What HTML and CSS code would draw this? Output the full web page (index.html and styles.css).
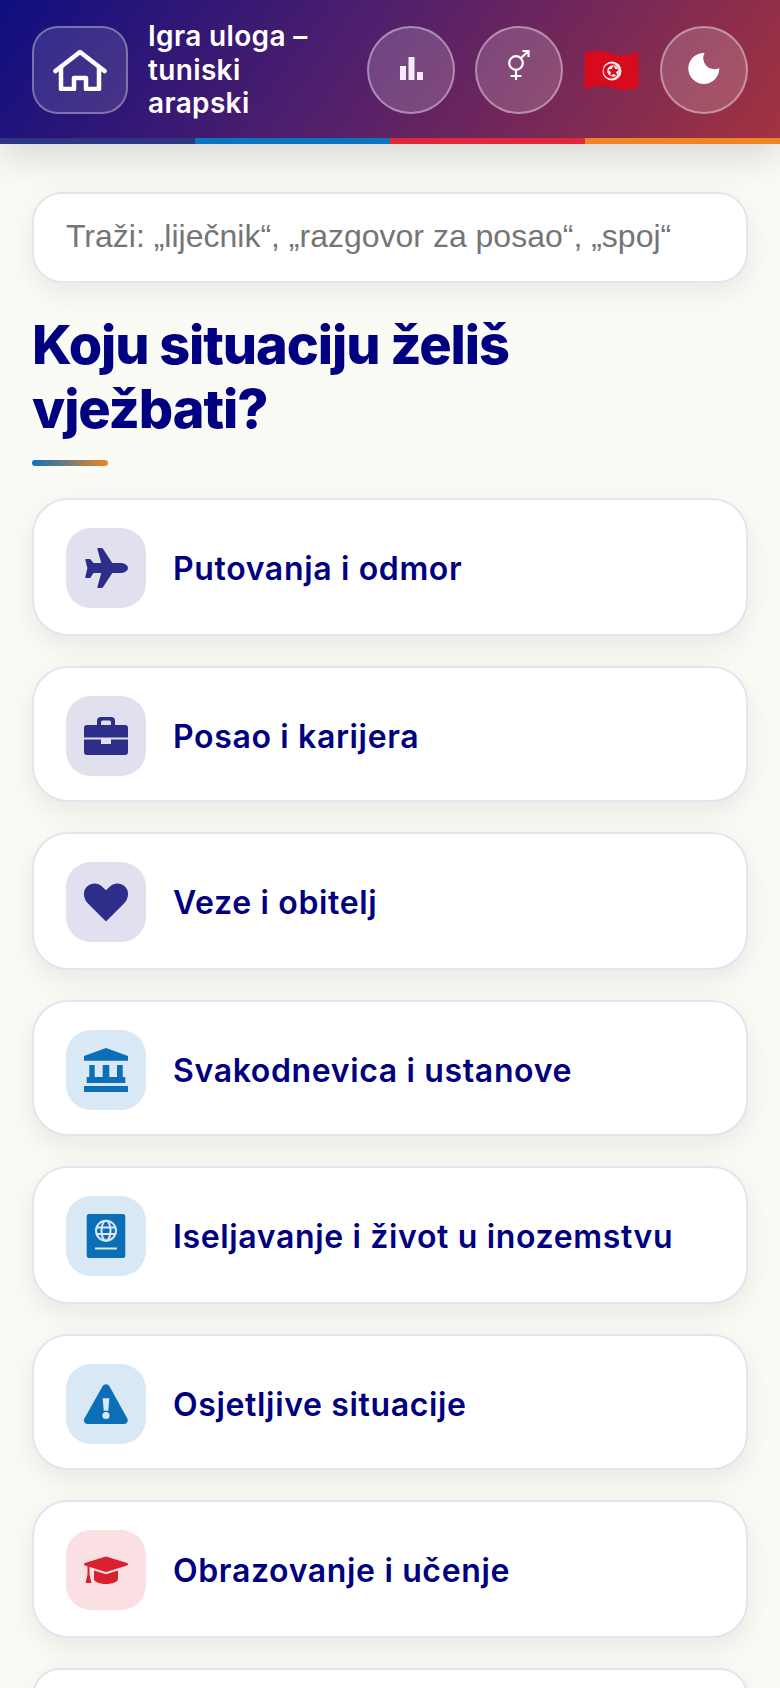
FILE: index.html
```html
<!DOCTYPE html>
<html lang="hr">
<head>
    <meta charset="UTF-8">
    <meta name="viewport" content="width=device-width, initial-scale=1.0">
    <title>Igra uloga – tuniski arapski</title>
    <link rel="stylesheet" href="styles.css">
</head>
<body>
    <!-- Header Section -->
    <header class="header">
        <div class="header-row">
            <button class="home-btn" aria-label="Početna">
                <svg class="icon-home" viewBox="0 0 54 42">
                    <path d="M2.500 22 27 3l24.500 19"/>
                    <path d="M8 19v21h13V29h12v11h13V19"/>
                </svg>
            </button>
            <div class="header-title">Igra uloga – tuniski arapski</div>
            <div class="header-actions">
                <button class="round-btn" aria-label="Statistika">
                    <svg class="icon-stats" viewBox="0 0 23 23">
                        <rect x="0" y="9" width="6" height="14"/>
                        <rect x="8.500" y="0" width="6" height="23"/>
                        <rect x="17" y="15" width="6" height="8"/>
                    </svg>
                </button>
                <button class="round-btn" aria-label="Rod">
                    <svg class="icon-gender" viewBox="0 0 22 30">
                        <circle cx="8" cy="13" r="6.800"/>
                        <path d="M8 20v10M2.500 26h11M13 8l7.500-7M14.500 1h6v6"/>
                    </svg>
                </button>
                <svg class="flag" viewBox="0 0 55 41" aria-label="Tunis">
                    <path class="flag-red" d="M1 3C9 0 20 1 28 4s18 2 26-2v35c-8 3-17 3-26 0S9 36 1 39z"/>
                    <circle class="flag-white" cx="28" cy="21" r="9.500"/>
                    <circle class="flag-red" cx="27" cy="21" r="7"/>
                    <circle class="flag-white" cx="29" cy="21" r="5.800"/>
                    <path class="flag-red" d="m29.500 16.500 1.300 3.100 3.300.2-2.500 2.100.8 3.200-2.900-1.700-2.800 1.800.8-3.200-2.600-2.100 3.300-.3z"/>
                </svg>
                <button class="round-btn" aria-label="Tamni način">
                    <svg class="icon-moon" viewBox="0 0 32 31">
                        <path d="M16.600 0A15.500 15.500 0 1 0 31.300 15 11 11 0 0 1 16.600 0z"/>
                    </svg>
                </button>
            </div>
        </div>
        <div class="color-bar">
            <span class="bar-navy"></span>
            <span class="bar-blue"></span>
            <span class="bar-red"></span>
            <span class="bar-orange"></span>
        </div>
    </header>

    <main class="container">
        <input class="search" type="text" placeholder="Traži: „liječnik“, „razgovor za posao“, „spoj“ …">

        <h1 class="page-title">Koju situaciju želiš vježbati?</h1>
        <div class="title-line"></div>

        <!-- Categories -->
        <div class="category-list">
            <a class="category">
                <span class="tile tile-navy">
                    <svg viewBox="0 0 44 44"><path d="M44 22c0 2.800-3.600 5-7.500 5h-8.200L19 41.300c-.3.400-.7.700-1.200.7h-3.500c-.6 0-1-.6-.9-1.100L17.200 27H9.500l-2.900 4.400c-.2.400-.6.600-1 .6H2.100c-.5 0-.9-.5-.8-1L3.400 22 1.300 14c-.1-.5.3-1 .8-1h3.500c.4 0 .8.200 1 .6L9.500 17h7.700L13.400 3.100c-.1-.5.3-1.100.9-1.100h3.500c.5 0 .9.300 1.200.7L28.300 17h8.200c3.900 0 7.500 2.200 7.500 5z"/></svg>
                </span>
                <span class="category-name">Putovanja i odmor</span>
            </a>
            <a class="category">
                <span class="tile tile-navy">
                    <svg viewBox="0 0 44 44"><path d="M13 11V7a4 4 0 0 1 4-4h10a4 4 0 0 1 4 4v4h-4V8a1.500 1.500 0 0 0-1.500-1.500h-7A1.500 1.500 0 0 0 17 8v3z"/><path d="M3 11h38a3 3 0 0 1 3 3v9.500H0V14a3 3 0 0 1 3-3z"/><path d="M0 25.500h17V30h10v-4.500h17V38a3 3 0 0 1-3 3H3a3 3 0 0 1-3-3z"/></svg>
                </span>
                <span class="category-name">Posao i karijera</span>
            </a>
            <a class="category">
                <span class="tile tile-navy">
                    <svg viewBox="0 0 44 44"><path d="M22 41.500 4 23.500C-1.200 18.400-1.200 10.600 3 6.600c4.400-4.200 11-4 15 0l4 3.600 4-3.600c4-4 10.600-4.200 15 0 4.200 4 4.200 11.800-1 16.900z"/></svg>
                </span>
                <span class="category-name">Veze i obitelj</span>
            </a>
            <a class="category">
                <span class="tile tile-blue">
                    <svg viewBox="0 0 44 44"><path d="M22 0 44 8v4.700H0V8z"/><path d="M5.300 17h5.400v12H5.300zM18.700 17h6.600v12h-6.600zM33 17h5.700v12H33z"/><path d="M2.700 29h38.600v6H2.700z"/><path d="M0 38h44v6H0z"/></svg>
                </span>
                <span class="category-name">Svakodnevica i ustanove</span>
            </a>
            <a class="category">
                <span class="tile tile-blue">
                    <svg viewBox="0 0 44 44"><rect x="2.700" y="0" width="38.600" height="44" rx="2.500"/><g class="tile-line"><circle cx="22" cy="16.700" r="10"/><ellipse cx="22" cy="16.700" rx="4.500" ry="10"/><path d="M12 13.500h20M12 20h20"/><path d="M11 34.500h22"/></g></svg>
                </span>
                <span class="category-name">Iseljavanje i život u inozemstvu</span>
            </a>
            <a class="category">
                <span class="tile tile-blue">
                    <svg viewBox="0 0 44 44"><path d="M18.700 4a4 4 0 0 1 6.600 0l18 32.500c1.200 2.500-.3 5.500-3.300 5.500H3.500C.6 42-.9 39 .4 36.500z"/><path class="tile-gap" d="M18.700 16.300h6.600l-1 12.500h-4.600z"/><circle class="tile-gap" cx="22" cy="33.500" r="3.600"/></svg>
                </span>
                <span class="category-name">Osjetljive situacije</span>
            </a>
            <a class="category">
                <span class="tile tile-red">
                    <svg viewBox="0 0 44 44"><path d="M21 8.700a4 4 0 0 1 2 0l20 6.300c1.300.4 1.300 2.100 0 2.500l-20 6.300a4 4 0 0 1-2 0L1 17.500c-1.300-.4-1.300-2.100 0-2.500z"/><path d="M10 22.500 21 26a4 4 0 0 0 2 0l11-3.500V31c0 2.800-5.400 5-12 5s-12-2.200-12-5z"/><path d="M3.500 17.500h2v9l2 8.500H1.500l2-8.500z"/></svg>
                </span>
                <span class="category-name">Obrazovanje i učenje</span>
            </a>
            <a class="category"></a>
        </div>
    </main>
</body>
</html>
```

FILE: styles.css
```css
/* Page */
html, body {
    height: 100%;
    overflow: hidden;
}
body {
    font-family: Inter, "Liberation Sans", sans-serif;
    margin: 0;
    background-color: #fbfbf5;
    color: #000080;
}
button {
    font: inherit;
    color: white;
    cursor: pointer;
    padding: 0;
}

/* Header Styling */
.header {
    position: relative;
    background: linear-gradient(125deg, #0f0f80 0%, #511f6c 45%, #a3333f 100%);
    box-shadow: 0 10px 40px rgba(0, 0, 0, 0.16);
}
.header-row {
    display: flex;
    align-items: center;
    padding: 20px 32px 17.500px;
}
.home-btn {
    flex: none;
    width: 96px;
    height: 88px;
    border-radius: 26px;
    border: 2px solid rgba(255, 255, 255, 0.32);
    background-color: rgba(255, 255, 255, 0.12);
    display: flex;
    align-items: center;
    justify-content: center;
}
.icon-home {
    width: 54px;
    height: 42px;
    fill: none;
    stroke: white;
    stroke-width: 4.500;
    stroke-linecap: round;
    stroke-linejoin: round;
}
.header-title {
    flex: 1;
    margin-left: 20px;
    max-width: 180px;
    color: white;
    font-size: 28px;
    font-weight: 600;
    line-height: 33.500px;
    letter-spacing: 0.35px;
}
.header-actions {
    margin-left: auto;
    display: flex;
    align-items: center;
    gap: 20px;
}
.round-btn {
    width: 88px;
    height: 88px;
    border-radius: 50%;
    border: 2px solid rgba(255, 255, 255, 0.38);
    background-color: rgba(255, 255, 255, 0.17);
    display: flex;
    align-items: center;
    justify-content: center;
}
.icon-stats {
    width: 23px;
    height: 23px;
    margin-bottom: 3px;
    fill: #f6ecf7;
}
.icon-gender {
    width: 22px;
    height: 30px;
    margin-bottom: 10px;
    fill: none;
    stroke: white;
    stroke-width: 2.200;
}
.icon-moon {
    width: 32px;
    height: 31px;
    margin-bottom: 3px;
    fill: white;
}
.flag {
    width: 55px;
    height: 41px;
    margin: 0 1px;
}
.flag-red {
    fill: #d70a1e;
    stroke: #d70a1e;
    stroke-width: 1;
    stroke-linejoin: round;
}
.flag-white {
    fill: #f7e6e6;
}
.color-bar {
    display: grid;
    grid-template-columns: repeat(4, 1fr);
    height: 6px;
}
.bar-navy {
    background-color: #2e3585;
}
.bar-blue {
    background-color: #0b74bf;
}
.bar-red {
    background-color: #e0283c;
}
.bar-orange {
    background-color: #ee8425;
}

/* Main content */
.container {
    padding: 48px 32px 0;
}
.search {
    display: block;
    box-sizing: border-box;
    width: 100%;
    height: 91px;
    padding: 0 62px 3px 32px;
    border: 2px solid #e4e4f0;
    border-radius: 30px;
    background-color: white;
    box-shadow: 0 10px 30px rgba(0, 0, 40, 0.08);
    font-family: "Liberation Sans", Arial, sans-serif;
    font-size: 32px;
}
.search::placeholder {
    color: #757575;
}
.page-title {
    max-width: 600px;
    margin: 30px 0 0;
    font-size: 54px;
    font-weight: 800;
    line-height: 64px;
    letter-spacing: -1.080px;
    color: #000080;
}
.title-line {
    width: 76px;
    height: 6px;
    margin: 19px 0 32px;
    border-radius: 3px;
    background: linear-gradient(90deg, #0b74bf, #ee8425);
}

/* Category cards */
.category-list {
    display: flex;
    flex-direction: column;
    gap: 30px;
}
.category {
    display: flex;
    align-items: center;
    gap: 27px;
    padding: 28px 32px 26px;
    border: 2px solid #e4e4f0;
    border-radius: 36px;
    background-color: white;
    box-shadow: 0 10px 30px rgba(0, 0, 40, 0.08);
}
.category:nth-child(even) {
    padding-bottom: 24px;
}
.tile {
    flex: none;
    width: 80px;
    height: 80px;
    border-radius: 25px;
    display: flex;
    align-items: center;
    justify-content: center;
}
.tile svg {
    width: 44px;
    height: 44px;
    overflow: visible;
}
.tile-navy {
    background-color: #e0e0ee;
    fill: #2e2e8a;
}
.tile-blue {
    background-color: #d9e8f5;
    fill: #0b6fb8;
}
.tile-red {
    background-color: #fadfe3;
    fill: #d8202f;
}
.tile-gap {
    fill: #d9e8f5;
}
.tile-line {
    fill: none;
    stroke: #d9e8f5;
    stroke-width: 2;
}
.category-name {
    font-size: 32px;
    font-weight: 600;
    letter-spacing: 0.65px;
    color: #000080;
}
```
